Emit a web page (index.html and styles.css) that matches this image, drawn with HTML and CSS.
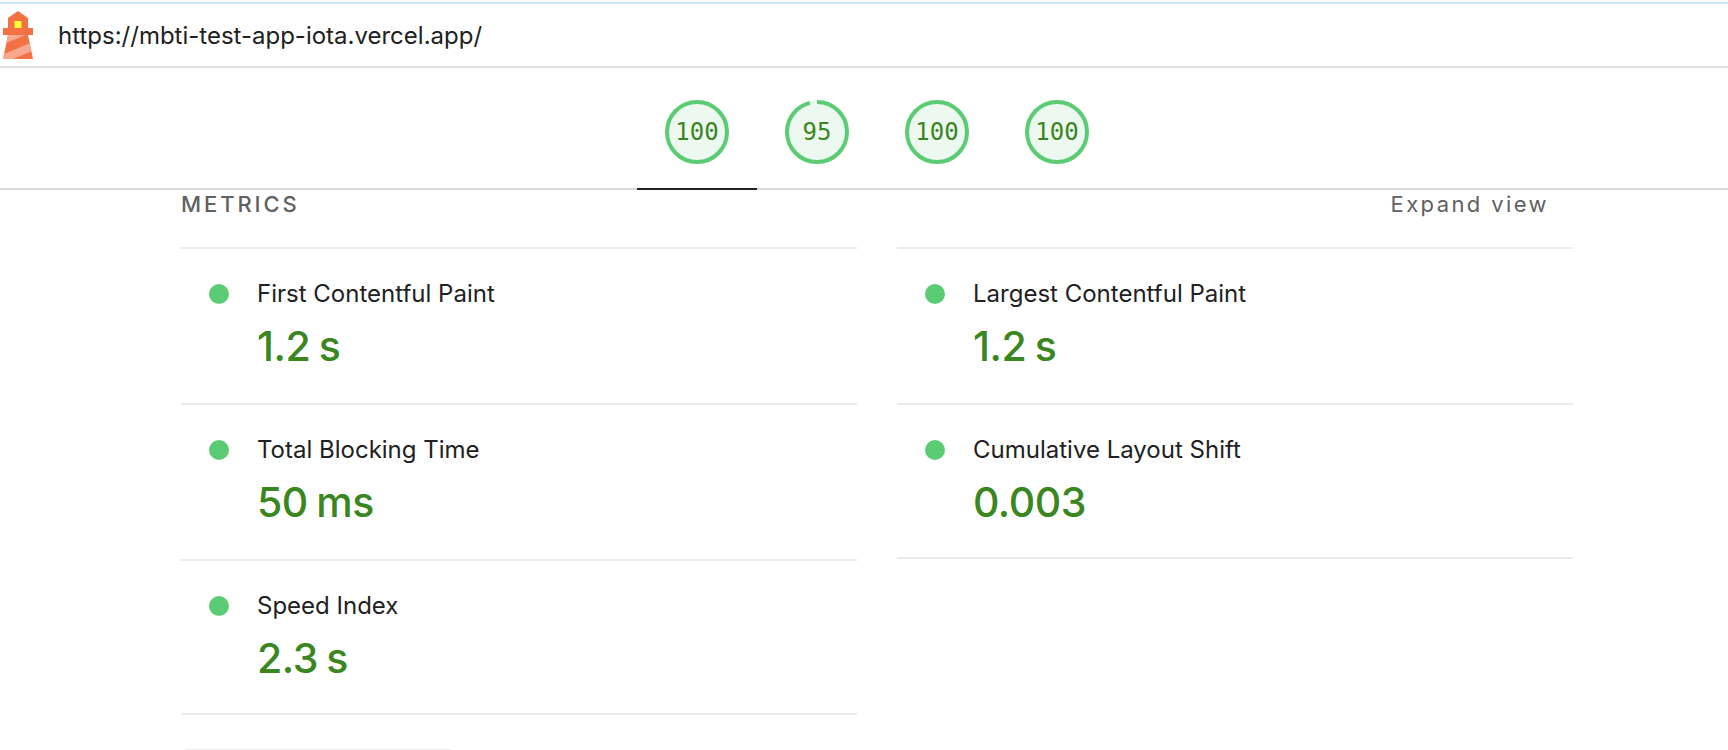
FILE: index.html
```html
<!DOCTYPE html>
<html lang="en">
<head>
<meta charset="utf-8">
<title>Lighthouse report</title>
<link rel="stylesheet" href="styles.css">
</head>
<body>
<header class="topbar">
  <svg class="logo" viewBox="9 0 30 48" aria-hidden="true">
    <path d="m14 7 10-7 10 7v10h5v7h-5l5 24H9l5-24H9v-7h5V7Z" fill="#F37143"/>
    <path d="M31.561 24H14l-1.689 8.105L31.561 24ZM18.983 48H9l1.022-4.907L35.723 32.27l1.663 7.98L18.983 48Z" fill="#F7A88E"/>
    <path fill="#FFFF33" d="M20.5 10h7v7h-7z"/>
  </svg>
  <span class="url">https://mbti-test-app-iota.vercel.app/</span>
</header>
<nav class="tabs">
  <a class="tab tab-active">
    <span class="gauge"><svg viewBox="0 0 64 64"><circle class="gauge-bg" cx="32" cy="32" r="32"/><circle class="gauge-arc" cx="32" cy="32" r="30"/></svg><span class="gauge-num">100</span></span>
  </a>
  <a class="tab">
    <span class="gauge"><svg viewBox="0 0 64 64"><circle class="gauge-bg" cx="32" cy="32" r="32"/><circle class="gauge-arc" cx="32" cy="32" r="30" stroke-dasharray="181 188.5" transform="rotate(-90 32 32)"/></svg><span class="gauge-num">95</span></span>
  </a>
  <a class="tab">
    <span class="gauge"><svg viewBox="0 0 64 64"><circle class="gauge-bg" cx="32" cy="32" r="32"/><circle class="gauge-arc" cx="32" cy="32" r="30"/></svg><span class="gauge-num">100</span></span>
  </a>
  <a class="tab">
    <span class="gauge"><svg viewBox="0 0 64 64"><circle class="gauge-bg" cx="32" cy="32" r="32"/><circle class="gauge-arc" cx="32" cy="32" r="30"/></svg><span class="gauge-num">100</span></span>
  </a>
</nav>
<main class="content">
  <div class="metrics-head">
    <span class="metrics-title">METRICS</span>
    <span class="expand">Expand view</span>
  </div>
  <div class="metrics-grid">
    <div class="metrics-col">
      <div class="metric"><span class="dot"></span><div><div class="metric-name">First Contentful Paint</div><div class="metric-value">1.2 s</div></div></div>
      <div class="metric"><span class="dot"></span><div><div class="metric-name">Total Blocking Time</div><div class="metric-value">50 ms</div></div></div>
      <div class="metric"><span class="dot"></span><div><div class="metric-name">Speed Index</div><div class="metric-value">2.3 s</div></div></div>
    </div>
    <div class="metrics-col">
      <div class="metric"><span class="dot"></span><div><div class="metric-name">Largest Contentful Paint</div><div class="metric-value">1.2 s</div></div></div>
      <div class="metric"><span class="dot"></span><div><div class="metric-name">Cumulative Layout Shift</div><div class="metric-value">0.003</div></div></div>
    </div>
  </div>
  <div class="next-btn"></div>
</main>
</body>
</html>
```
FILE: styles.css
```css
html, body {
  margin: 0;
  padding: 0;
  background: #fff;
  height: 750px;
  overflow: hidden;
  font-family: Inter, "Liberation Sans", sans-serif;
}
.topbar {
  box-sizing: border-box;
  height: 66px;
  margin-top: 2px;
  border-top: 2px solid #d3e2fb;
  border-bottom: 2px solid #e0e0e0;
  display: flex;
  align-items: center;
  padding-left: 3px;
}
.logo {
  width: 30px;
  height: 48px;
  flex: none;
}
.url {
  margin-left: 25px;
  font-size: 24px;
  color: #212121;
}
.tabs {
  box-sizing: border-box;
  height: 122px;
  padding-left: 637px;
  padding-top: 32px;
  border-bottom: 2px solid #dcdcdc;
  display: flex;
}
.tab {
  box-sizing: border-box;
  width: 120px;
  height: 90px;
  display: flex;
  justify-content: center;
}
.tab-active {
  border-bottom: 2px solid #212121;
}
.gauge {
  position: relative;
  display: block;
  width: 64px;
  height: 64px;
}
.gauge svg {
  display: block;
  width: 64px;
  height: 64px;
}
.gauge-bg {
  fill: #edf8f0;
  stroke: none;
}
.gauge-arc {
  fill: none;
  stroke: #5bcc74;
  stroke-width: 4;
}
.gauge-num {
  position: absolute;
  inset: 0;
  display: flex;
  align-items: center;
  justify-content: center;
  font-family: "DejaVu Sans Mono", monospace;
  font-size: 24px;
  color: #3a861f;
}
.content {
  padding: 0 155px 0 181px;
}
.metrics-head {
  height: 57px;
  display: flex;
  justify-content: space-between;
  align-items: flex-start;
  padding-right: 24px;
  color: #616161;
}
.metrics-title {
  font-size: 22px;
  font-weight: 500;
  letter-spacing: 2.9px;
  line-height: 28px;
}
.expand {
  font-size: 22px;
  letter-spacing: 2.4px;
  line-height: 28px;
}
.metrics-grid {
  display: grid;
  grid-template-columns: 676px 676px;
  column-gap: 40px;
  align-items: start;
}
.metrics-col {
  border-top: 2px solid #ebebeb;
}
.metric {
  box-sizing: border-box;
  height: 156px;
  border-bottom: 2px solid #ebebeb;
  padding: 30px 0 0 28px;
  display: flex;
  gap: 28px;
}
.metric:last-child {
  height: 154px;
}
.dot {
  flex: none;
  width: 20px;
  height: 20px;
  margin-top: 5px;
  border-radius: 50%;
  background: #5bcc74;
}
.metric-name {
  font-size: 24px;
  line-height: 30px;
  color: #212121;
}
.metric-value {
  font-size: 41px;
  font-weight: 500;
  line-height: 54px;
  margin-top: 10px;
  letter-spacing: -0.5px;
  word-spacing: -2px;
  color: #3a861f;
}
.next-btn {
  box-sizing: border-box;
  width: 269px;
  height: 30px;
  margin: 34px 0 0 3px;
  border: 2px solid #ebebeb;
  border-radius: 4px;
}
```
